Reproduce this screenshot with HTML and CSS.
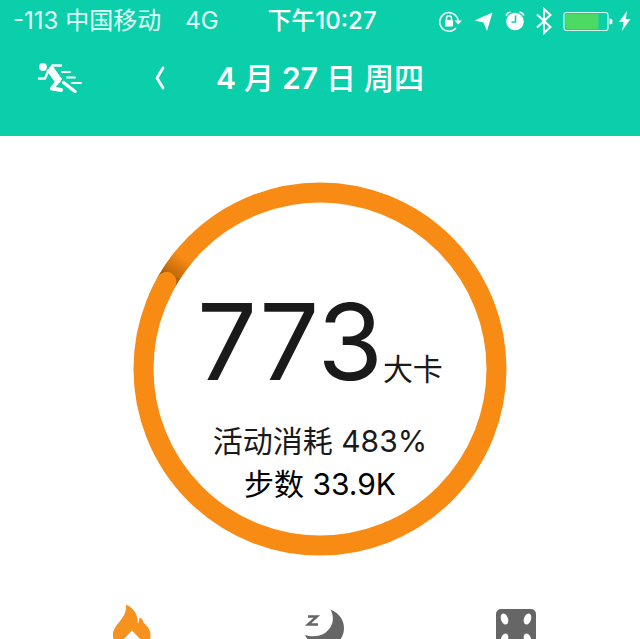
FILE: index.html
```html
<!DOCTYPE html>
<html lang="zh-CN">
<head>
<meta charset="utf-8">
<meta name="viewport" content="width=device-width, initial-scale=1">
<title>活动消耗</title>
<link rel="stylesheet" href="styles.css">
</head>
<body>
<header class="top">
  <div class="status">
    <div class="carrier"><span>-113 中国移动</span><span>4G</span></div>
    <time class="clock">下午10:27</time>
    <div class="indicators">
      <svg width="24" height="28" viewBox="0 0 24 28" aria-hidden="true">
        <path d="M17.500 9.500A9.300 9.300 0 1 0 17 21" fill="none" stroke="#fff" stroke-width="1.500"/>
        <path d="M17.500 9.500Q19 11.500 19.300 14" fill="none" stroke="#fff" stroke-width="1.500"/>
        <path d="M15.500 13.500h7.500l-3.700 4z" fill="#fff"/>
        <rect x="6" y="13" width="8" height="6.500" rx="0.800" fill="#fff"/>
        <path d="M7.500 13.500v-2a2.500 2.700 0 0 1 5 0v2" fill="none" stroke="#fff" stroke-width="1.400"/>
      </svg>
      <svg width="20" height="28" viewBox="0 0 20 28" aria-hidden="true">
        <path d="M18.500 5.500 13 24 9.500 15.500 0.500 13.500z" fill="#fff"/>
      </svg>
      <svg width="20" height="28" viewBox="0 0 20 28" aria-hidden="true">
        <circle cx="10" cy="14.500" r="8.800" fill="#fff"/>
        <path d="M1.200 8.500Q2 5.500 5.500 5.200M18.800 8.500Q18 5.500 14.500 5.200" fill="none" stroke="#fff" stroke-width="1.600"/>
        <path d="M10.500 8.500v6.500H6.500" fill="none" stroke="#0bcfaa" stroke-width="1.600"/>
      </svg>
      <svg width="16" height="28" viewBox="0 0 16 28" aria-hidden="true">
        <path d="M1 7.500 14.500 20 8 26V2l6.500 6L1 20.500" fill="none" stroke="#fff" stroke-width="2"/>
      </svg>
      <svg class="battery" width="50" height="28" viewBox="0 0 50 28" aria-hidden="true">
        <rect x="1" y="5.500" width="44" height="18" rx="2.500" fill="none" stroke="#d5fff3" stroke-width="1.200"/>
        <rect x="2.500" y="7" width="33" height="15" rx="1" fill="#4cd964"/>
        <path d="M46.500 11.500q3 0 3 3t-3 3z" fill="#fff"/>
      </svg>
      <svg width="12" height="28" viewBox="0 0 12 28" aria-hidden="true">
        <path d="M8 4 0 15h4.700L3 24 11.500 12H6.800z" fill="#fff"/>
      </svg>
    </div>
  </div>
  <nav class="datebar">
    <button class="run" type="button" aria-label="运动">
      <svg width="46" height="32" viewBox="0 0 46 32" aria-hidden="true">
        <g fill="none" stroke="#fff" stroke-linecap="round" stroke-linejoin="round">
          <path d="M24 3.500h-8.500L11 9.500M11 9.500 8 16.500H2" stroke-width="2.400"/>
          <path d="M24 28 15 26.500 21 19" stroke-width="4.200"/>
          <path d="M26.500 20.500 38 29.500" stroke-width="3.400"/>
          <path d="M25 10h8M30 15.500h8M35 21h9" stroke-width="1.900"/>
        </g>
        <path d="M10 8.500 15.500 4.500 24.500 17 22 21 18 19.500z" fill="#fff" stroke="#fff" stroke-linejoin="round"/>
        <circle cx="6" cy="5" r="3.900" fill="#fff"/>
      </svg>
    </button>
    <button class="prev" type="button" aria-label="前一天">
      <svg width="12" height="28" viewBox="0 0 12 28" aria-hidden="true">
        <path d="M9 4 3 14l6 10" fill="none" stroke="#fff" stroke-width="2.800" stroke-linecap="round" stroke-linejoin="round"/>
      </svg>
    </button>
    <h1 class="date"><b>4</b> 月 <b>27</b> 日 周四</h1>
  </nav>
</header>
<main class="content">
  <section class="ring">
    <svg class="ring-art" viewBox="0 0 374 374" aria-hidden="true">
      <defs>
        <linearGradient id="shade" gradientUnits="userSpaceOnUse" x1="34" y1="99" x2="50" y2="75">
          <stop offset="0" stop-color="#8c4c08"/>
          <stop offset="0.350" stop-color="#c56c0c"/>
          <stop offset="1" stop-color="#f88b13"/>
        </linearGradient>
      </defs>
      <circle cx="187" cy="187" r="176.500" fill="none" stroke="#f88b13" stroke-width="20"/>
      <path d="M34.100 98.800A176.500 176.500 0 0 1 51 74.500" fill="none" stroke="url(#shade)" stroke-width="20"/>
      <path d="M25.500 116A176.500 176.500 0 0 1 33.500 99.900" fill="none" stroke="#f88b13" stroke-width="20" stroke-linecap="round"/>
    </svg>
    <div class="reading">
      <p class="energy"><span class="value">773</span><span class="unit">大卡</span></p>
      <p class="burn">活动消耗 483%</p>
      <p class="steps">步数 33.9K</p>
    </div>
  </section>
  <nav class="tabs">
    <button type="button" aria-label="消耗">
      <svg width="40" height="46" viewBox="0 0 40 46" aria-hidden="true">
        <path d="M14 0.500C21 4 26.500 10 25.500 19q1.500 0.500 2-5.500c3 1 3.500 3 4 5 4 4 7 7 7 13 0 9-8 14-19 14S1 40 1 31C1 20 15.500 15 14 0.500Z" fill="#f6921e"/>
        <path d="M20 26.500 29 36q0 8-9 8t-9-8z" fill="#fff"/>
      </svg>
    </button>
    <button type="button" aria-label="睡眠">
      <svg width="40" height="46" viewBox="0 0 40 46" aria-hidden="true">
        <path d="M26.500 5.500C35 9 40 16 40 24 40 35 32 43 20 43 11 43 4 38 1 31 7 33 15 33 21 29 29 23 31 14 26.500 5.500Z" fill="#666"/>
        <path d="M4 12.500h9L4 20.500h10" fill="none" stroke="#666" stroke-width="2.400"/>
      </svg>
    </button>
    <button type="button" aria-label="更多">
      <svg width="40" height="46" viewBox="0 0 40 46" aria-hidden="true">
        <rect y="5" width="40" height="40" rx="5" fill="#666"/>
        <g fill="#fff">
          <ellipse cx="8.500" cy="15" rx="3.500" ry="5.700" transform="rotate(-20 8.500 15)"/>
          <ellipse cx="31.500" cy="15" rx="3.500" ry="5.700" transform="rotate(20 31.500 15)"/>
          <ellipse cx="8.500" cy="35" rx="3.500" ry="5.700" transform="rotate(20 8.500 35)"/>
          <ellipse cx="31.500" cy="35" rx="3.500" ry="5.700" transform="rotate(-20 31.500 35)"/>
        </g>
      </svg>
    </button>
  </nav>
</main>
</body>
</html>
```
FILE: styles.css
```css
* {
  box-sizing: border-box;
}

body {
  margin: 0;
  height: 100vh;
  overflow: hidden;
  background: #fff;
  color: #1a1a1a;
  font-family: Inter, "Noto Sans CJK SC", sans-serif;
}

h1,
p {
  margin: 0;
}

button {
  padding: 0;
  border: 0;
  background: none;
}

svg {
  display: block;
}

.top {
  background: #0bcfaa;
  color: #fff;
  padding-bottom: 20px;
}

.status {
  display: grid;
  grid-template-columns: 1fr auto 1fr;
  align-items: center;
  height: 40px;
  padding: 0 9px 0 13px;
  font-size: 24px;
  line-height: 42px;
  white-space: nowrap;
}

.carrier {
  display: flex;
  gap: 24px;
  color: #e0fff6;
}

.clock {
  font-weight: 500;
}

.indicators {
  display: flex;
  justify-content: flex-end;
  gap: 11px;
}

.battery {
  margin-right: -5px;
}

.datebar {
  display: grid;
  grid-template-columns: 1fr auto 1fr;
  grid-template-areas: "tools date .";
  align-items: center;
  height: 76px;
  padding: 0 37px;
}

.run {
  grid-area: tools;
  justify-self: start;
}

.prev {
  grid-area: tools;
  justify-self: end;
  margin-right: 50px;
}

.date {
  grid-area: date;
  font-size: 30px;
  font-weight: 500;
  line-height: 40px;
}

.date b {
  font-weight: 600;
}

.content {
  padding-top: 46px;
}

.ring {
  display: grid;
  place-items: center;
  width: 374px;
  max-width: 100%;
  margin: 0 auto;
}

.ring-art,
.reading {
  grid-area: 1 / 1;
}

.ring-art {
  width: 100%;
}

.reading {
  padding-top: 64px;
  text-align: center;
  white-space: nowrap;
}

.energy {
  line-height: 92px;
}

.value {
  font-size: 106px;
}

.unit {
  font-size: 30px;
}

.burn,
.steps {
  font-size: 30px;
  line-height: 43px;
}

.steps {
  color: #000;
}

.tabs {
  display: grid;
  grid-template-columns: repeat(3, 1fr);
  justify-items: center;
  margin-top: 48px;
  padding: 0 28px 0 36px;
}
```
